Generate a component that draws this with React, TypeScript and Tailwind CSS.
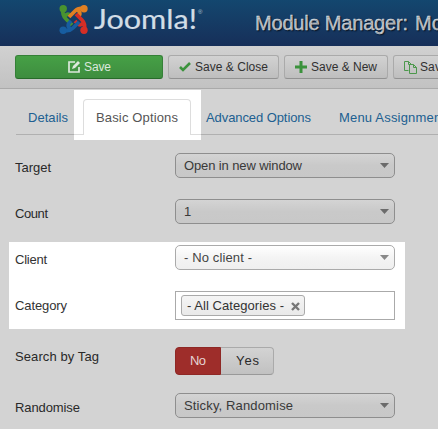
import type { ReactNode } from 'react';

function Label({ children, width, className = 'pt-[6px]' }: { children: string; width: number; className?: string }) {
  return (
    <div className={`w-40 shrink-0 leading-[18px] ${className}`}>
      <Txt width={width}>{children}</Txt>
    </div>
  );
}

function Txt({ children, width, className = '' }: { children: string; width: number; className?: string }) {
  return (
    <svg className={`inline-block h-[18px] shrink-0 overflow-visible align-top ${className}`} style={{ width }}>
      <text x="0" y="13" fill="currentColor" textLength={width}>{children}</text>
    </svg>
  );
}

function Select({ children, width, light = false }: { children: string; width: number; light?: boolean }) {
  const tone = light
    ? 'border-[#aaa] from-white via-[#f4f4f4] to-[#efefef] text-[#444]'
    : 'border-[#8e8e8e] from-[#d4d4d4] via-[#c9c9c9] to-[#c8c8c8] text-[#393939]';
  return (
    <div className={`flex h-[25px] w-[220px] items-center justify-between rounded-[5px] border bg-linear-to-b pr-[5px] pl-2 ${tone}`}>
      <Txt width={width}>{children}</Txt>
      <svg className={light ? 'text-[#888]' : 'text-[#6b6b6b]'} width="9" height="5" viewBox="0 0 9 5" fill="currentColor">
        <path d="M0 0h9L4.5 5z" />
      </svg>
    </div>
  );
}

function ToolButton({ children, className }: { children: ReactNode; className: string }) {
  return (
    <button className={`flex h-6 shrink-0 items-center rounded-[3px] border border-[#aaa] border-b-[#929292] bg-linear-to-b from-[#d2d2d2] to-[#bebebe] text-[12px] text-[#303030] ${className}`}>
      {children}
    </button>
  );
}

function JoomlaMark() {
  return (
    <svg className="ml-[59px] shrink-0" width="30" height="31" viewBox="0 0 30 31" fill="none" strokeWidth="3.8" strokeLinejoin="round">
      <path stroke="#49932f" d="M4 5Q3 11 7 15L13 21M6 12Q8 9 11 11" />
      <path stroke="#e18022" d="M26 5Q20 3 16 7L10 13M19 6Q22 9 20 12" />
      <path stroke="#d52e25" d="M25 26Q27 20 23 16L17 10M24 19Q22 22 19 20L16 17" />
      <path stroke="#175da0" d="M4 26Q10 28 14 24L20 18M11 25Q8 22 10 19L12 17" />
      <circle cx="4.2" cy="4.7" r="3.7" fill="#49932f" />
      <circle cx="25" cy="4.7" r="3.7" fill="#e18022" />
      <circle cx="25" cy="26.3" r="3.7" fill="#d52e25" />
      <circle cx="4.2" cy="26.3" r="3.7" fill="#175da0" />
    </svg>
  );
}

export default function App() {
  return (
    <div className="h-[429px] w-[438px] overflow-hidden bg-[#d3d3d3] font-['Liberation_Sans',Arial,sans-serif] text-[13px] text-[#292929]">
      <header className="flex h-[46px] items-start bg-linear-to-b from-[#13476f] to-[#162f59] pt-1">
        <JoomlaMark />
        <svg className="ml-[5px] shrink-0 overflow-visible" width="110" height="31">
          <text x="0" y="24.5" fill="#d2dde6" stroke="#d2dde6" strokeWidth="0.2" fontFamily="Lato, sans-serif" fontSize="27" textLength="103" lengthAdjust="spacingAndGlyphs">Joomla!</text>
          <text x="104" y="10" fill="#b9c8d5" fontSize="6">®</text>
        </svg>
        <svg className="ml-[51px] h-[30px] w-[240px] shrink-0 overflow-visible text-[20px] [text-shadow:1px_1px_1px_#071527]">
          <text x="0" y="26" fill="#dedede" stroke="#dedede" strokeWidth="0.3" textLength="153">Module Manager:</text>
          <text x="160" y="26" fill="#dedede" stroke="#dedede" strokeWidth="0.3">Module</text>
        </svg>
      </header>

      <div className="flex h-[43px] gap-[5px] overflow-hidden border-b border-[#aaa] bg-linear-to-b from-[#d1d1d1] to-[#c2c2c2] pt-[9px] pl-[15px]">
        <button className="flex h-6 w-[148px] shrink-0 items-center rounded-[3px] border border-[#358038] border-b-[#286b2a] bg-linear-to-b from-[#46a046] to-[#3e8d3f] pl-[52px] text-[12px] text-[#dce8dc]">
          <svg width="12" height="12" viewBox="0 0 12 12" fill="none" stroke="currentColor" strokeWidth="1.7">
            <path d="M7 1H1v10h10V6" /><path d="M4 8l1-3 5-5 2 2-5 5z" fill="currentColor" stroke="none" />
          </svg>
          <Txt width={27} className="ml-1">Save</Txt>
        </button>
        <ToolButton className="w-[111px] pl-[10px]">
          <svg width="12" height="10" viewBox="0 0 12 10" fill="none" stroke="#3b923c" strokeWidth="2.6"><path d="M1 5l3 3 7-7" /></svg>
          <Txt width={73} className="ml-1">Save & Close</Txt>
        </ToolButton>
        <ToolButton className="w-[104px] pl-[10px]">
          <svg width="12" height="12" viewBox="0 0 12 12" fill="none" stroke="#3b923c" strokeWidth="3"><path d="M6 0v12M0 6h12" /></svg>
          <Txt width={66} className="ml-1">Save & New</Txt>
        </ToolButton>
        <ToolButton className="w-[112px] pl-[10px]">
          <svg width="13" height="13" viewBox="0 0 13 13" fill="none" stroke="#4c984c"><path d="M4.5 9.5h-4v-9h4l3 3M4.5.5v3h3M5.5 3.5h4l3 3v6h-7zM9.5 3.5v3h3" /></svg>
          <Txt width={76} className="ml-[3px]">Save as Copy</Txt>
        </ToolButton>
      </div>

      <nav className="flex h-[51px] pt-px text-[#205f91]">
        <div className="ml-4 h-[45px] w-[58px] shrink-0 border-b border-[#b0b0b0] pt-[19px] pl-3"><Txt width={40}>Details</Txt></div>
        <div className="flex h-[50px] w-[127px] shrink-0 bg-white text-[#555]">
          <div className="h-[45px] w-[9px] border-b border-[#ddd]" />
          <div className="mt-[9px] h-9 w-[108px] rounded-t-[4px] border border-b-0 border-[#ddd] pt-[9px] pl-3"><Txt width={82}>Basic Options</Txt></div>
          <div className="h-[45px] w-[10px] border-b border-[#ddd]" />
        </div>
        <div className="flex h-[45px] w-[237px] shrink-0 gap-[28px] overflow-hidden border-b border-[#b0b0b0] pt-[19px] pl-[5px]">
          <Txt width={105}>Advanced Options</Txt>
          <Txt width={106}>Menu Assignment</Txt>
        </div>
      </nav>

      <main className="pt-[13px]">
        <div className="flex h-[46px] pl-[15px]"><Label width={36}>Target</Label><Select width={118}>Open in new window</Select></div>
        <div className="flex h-[43px] pl-[15px]"><Label width={33}>Count</Label><Select width={7}>1</Select></div>
        <section className="ml-[9px] h-[87px] w-[396px] bg-white pt-[3px] pl-[6px] text-[#333]">
          <div className="flex h-[46px]"><Label width={32}>Client</Label><Select light width={68}>- No client -</Select></div>
          <div className="flex">
            <Label width={52}>Category</Label>
            <div className="h-[29px] w-[220px] border border-[#aaa] px-[5px] pt-[3px]">
              <div className="flex h-[21px] w-[124px] items-center rounded-[3px] border border-[#aaa] bg-linear-to-b from-[#f5f5f5] to-[#e9e9e9] pl-[5px]">
                <Txt width={97}>- All Categories -</Txt>
                <svg className="mt-px ml-[7px]" width="9" height="9" viewBox="0 0 9 9" stroke="#777" strokeWidth="2.4"><path d="M1 1l7 7M8 1L1 8" /></svg>
              </div>
            </div>
          </div>
        </section>
        <div className="mt-[18px] flex h-[46px] pl-[15px]">
          <Label width={84} className="pt-px">Search by Tag</Label>
          <div className="flex h-7">
            <button className="flex w-[46px] items-center rounded-l-[4px] border border-[#8e2825] bg-[#9e2d2a] pl-[14px] text-[#e5d4d3]"><Txt width={16}>No</Txt></button>
            <button className="flex w-[53px] items-center rounded-r-[4px] border border-l-0 border-[#aaa] border-b-[#999] bg-linear-to-b from-[#d3d3d3] to-[#c1c1c1] pl-[15px]"><Txt width={23}>Yes</Txt></button>
          </div>
        </div>
        <div className="flex pl-[15px]"><Label width={65}>Randomise</Label><Select width={109}>Sticky, Randomise</Select></div>
      </main>
    </div>
  );
}
